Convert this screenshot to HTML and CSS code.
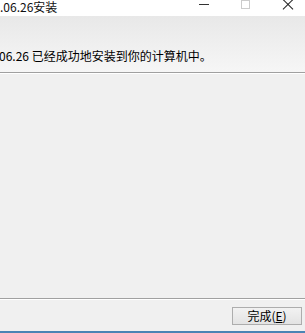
FILE: index.html
```html
<!DOCTYPE html>
<html lang="zh">
<head>
<meta charset="utf-8">
<link rel="stylesheet" href="styles.css">
</head>
<body>
<div class="window">
  <div class="titlebar">
    <span class="title">.06.26安装</span>
    <div class="controls">
      <span class="ctl"><span class="ico-min"></span></span>
      <span class="ctl"><span class="ico-max"></span></span>
      <span class="ctl"><span class="ico-close"></span></span>
    </div>
  </div>
  <div class="header">
    <p class="msg">06.26 已经成功地安装到你的计算机中。</p>
  </div>
  <div class="body"></div>
  <div class="footer">
    <button class="btn">完成(<u>E</u>)</button>
  </div>
  <div class="bottomline"></div>
</div>
</body>
</html>
```
FILE: styles.css
```css
* { box-sizing: border-box; }
html, body { margin: 0; padding: 0; }
body {
  width: 305px;
  height: 333px;
  overflow: hidden;
  font-family: "Noto Sans CJK SC", "Noto Sans", sans-serif;
  font-size: 12px;
  color: #000;
  background: #f0f0f0;
}
.window {
  display: flex;
  flex-direction: column;
  width: 305px;
  height: 333px;
}
.titlebar {
  height: 16px;
  background: #fff;
  display: flex;
  align-items: flex-start;
  justify-content: space-between;
  flex-shrink: 0;
}
.title {
  font-size: 12px;
  line-height: 13px;
  color: #111;
  white-space: nowrap;
}
.controls {
  display: flex;
  align-items: flex-start;
  gap: 30px;
  padding-right: 11px;
}
.ctl {
  display: block;
  position: relative;
  width: 12px;
  height: 12px;
}
.ico-min {
  display: block;
  width: 10px;
  height: 1px;
  margin: 4px 0 0 1px;
  background: #333;
}
.ico-max {
  display: block;
  width: 9px;
  height: 9px;
  margin: 0 0 0 1px;
  border: 1px solid #cccccc;
}
.ico-close {
  display: block;
  position: relative;
  width: 12px;
  height: 12px;
}
.ico-close::before,
.ico-close::after {
  content: "";
  position: absolute;
  left: -1px;
  top: 4px;
  width: 14px;
  height: 1.2px;
  background: #222;
}
.ico-close::before { transform: rotate(45deg); }
.ico-close::after { transform: rotate(-45deg); }
.header {
  height: 57px;
  background: linear-gradient(#e8e8e8, #f6f6f6);
  border-bottom: 1px solid #a0a0a0;
  flex-shrink: 0;
  padding-top: 33px;
}
.msg {
  margin: 0;
  font-size: 12px;
  line-height: 14px;
  margin-left: -1px;
  white-space: nowrap;
}
.body {
  flex: 1;
  border-top: 1px solid #fff;
  background: #f0f0f0;
}
.footer {
  height: 33px;
  border-top: 1px solid #a0a0a0;
  box-shadow: inset 0 1px 0 #fff;
  display: flex;
  justify-content: flex-end;
  align-items: flex-start;
  padding-top: 8px;
  padding-right: 3px;
  flex-shrink: 0;
}
.btn {
  width: 70px;
  height: 18px;
  padding: 0;
  font-family: "Noto Sans CJK SC", sans-serif;
  font-size: 12px;
  line-height: 14px;
  color: #000;
  background: linear-gradient(#f2f2f2, #e3e3e3);
  border: 1px solid #adadad;
  border-radius: 0;
}
.btn u { text-decoration: underline; }
.bottomline {
  height: 2px;
  background: #4a84b4;
  flex-shrink: 0;
}
```
